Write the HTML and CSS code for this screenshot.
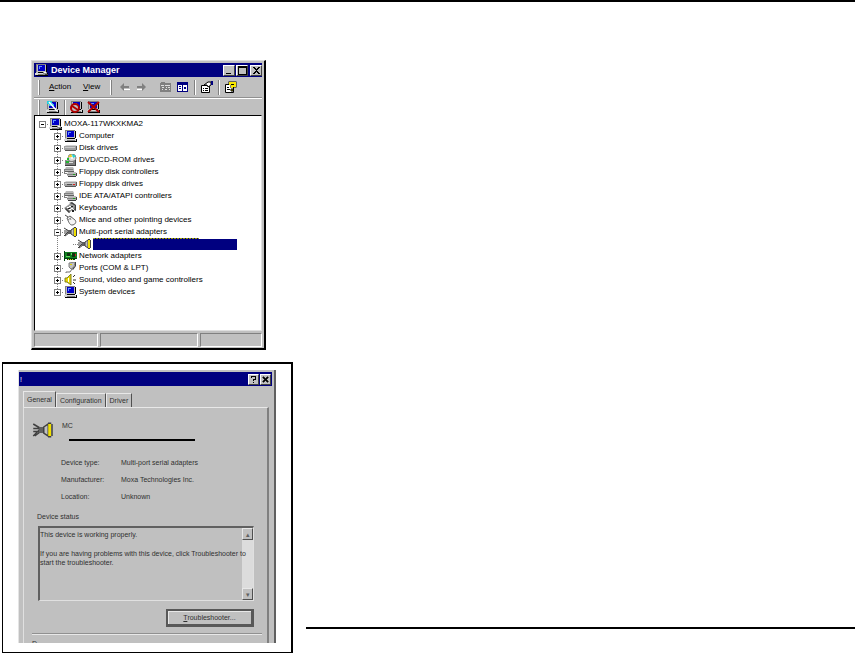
FILE: index.html
```html
<!DOCTYPE html>
<html lang="en">
<head>
<meta charset="utf-8">
<title>Device Manager</title>
<link rel="stylesheet" href="styles.css">
</head>
<body>
<svg class="defs" aria-hidden="true">
  <symbol id="pc" viewBox="0 0 13 12"><path fill="#c0c0c0" d="M1 0h10v9H1z"/><path fill="#808080" d="M1 0h10v1H1zM1 0h1v8H1z"/><path fill="#0000c8" d="M3 1h7v6H3z"/><path fill="#6090ff" d="M4 2h3v1H4zM4 3h1v2H4z"/><path fill="#000" d="M11 1h1v7h-1zM3 8h8v1H3zM1 11h12v1H1zM12 9h1v2h-1z"/><path fill="#d8d8d8" d="M0 9h12v2H0z"/><path fill="#808080" d="M3 10h8v1H3z"/></symbol>
  <symbol id="scan" viewBox="0 0 13 12"><use href="#pc"/><path fill="#20d0e0" d="M1 0h5v3H1zM3 3h5v2H3z"/><path stroke="#fff" stroke-width="1.500" d="M3 1l8 9"/></symbol>
  <symbol id="root" viewBox="0 0 13 12"><use href="#pc"/><path fill="#909090" d="M8 8h4v3H8z"/><path fill="#fff" d="M9 8h2v1H9z"/><path fill="#404040" d="M10 10h3v1h-3z"/></symbol>
  <symbol id="disk" viewBox="0 0 13 12"><path fill="#d0d0d0" d="M2 3h10l1 1H1z"/><path fill="#a0a0a0" d="M0 4h13v4H0z"/><path fill="#c8c8c8" d="M1 5h10v1H1z"/><path fill="#585858" d="M1 8h11v1H1zM12 4h1v4h-1z"/></symbol>
  <symbol id="floppy" viewBox="0 0 13 12"><use href="#disk"/><path fill="#505050" d="M3 6h5v1H3z"/><path fill="#e02020" d="M9 6h2v1H9z"/></symbol>
  <symbol id="cd" viewBox="0 0 13 12"><circle cx="8" cy="4" r="4" fill="#d8d8d8" stroke="#808080"/><path fill="#20d8d0" d="M8 0l4 2-3 2z"/><path fill="#e8d820" d="M4 3l3-3 1 3z"/><circle cx="8" cy="4" r="1" fill="#fff"/><path fill="#808080" d="M1 6l7 1 3-1v5H1z"/><path fill="#20b830" d="M3 4h2v2H3zM2 7h3v2H2z"/><path fill="#ddd" d="M5 8h4v1H5z"/><path fill="#404040" d="M1 11h11v1H1zM11 6h1v5h-1z"/></symbol>
  <symbol id="ctl" viewBox="0 0 13 12"><path fill="#b8b8b8" d="M2 1h7l1 2v2H1V3z"/><path fill="#606060" d="M1 5h9v1H1z"/><path fill="#b8b8b8" d="M4 6h8l1 2v2H3V8z"/><path fill="#808080" d="M1 3h8v1H1zM3 8h9v1H3zM0 3h1v4h2v1H0z"/><path fill="#404040" d="M4 10h8v1H4zM12 7h1v3h-1z"/><path fill="#20a020" d="M9 8h2v1H9z"/></symbol>
  <symbol id="keys" viewBox="0 0 13 12"><path fill="#989898" d="M0 6l7-5 5 4-7 6z"/><path fill="#404040" d="M5 1l3-1 4 3v6l-2-1 1-4-3-2zM1 7l4 4 1-1-4-4z"/><path fill="#fff" d="M3 5h2v1H3zM5 4h2v1H5zM5 7h2v1H5zM7 6h2v1H7z"/><path fill="#202020" d="M4 6h2v1H4zM7 4h2v1H7zM8 8h2v2H8z"/></symbol>
  <symbol id="mouse" viewBox="0 0 13 12"><path fill="none" stroke="#505050" d="M1 1l3 2"/><path fill="#f4f4f4" stroke="#606060" d="M3 4l3-2 5 4c2 2 0 5-3 5-2 0-3-2-5-7z"/><path fill="none" stroke="#888" d="M4 6l4-3M6 4l1 2"/></symbol>
  <symbol id="port" viewBox="0 0 13 12"><path fill="none" stroke="#404040" d="M0 2l5 3-5 5M0 5h5M0 7h4M1 10l4-3"/><path fill="#606060" d="M4 4h3v4H4z"/><path fill="#c0c0c0" stroke="#404040" d="M7 4l3-2v8L7 8z"/><path fill="#f0e000" d="M10 2h2v8h-2z"/><path fill="#404040" d="M10 1h2v1h-2zM12 2h1v8h-1zM10 10h2v1h-2z"/></symbol>
  <symbol id="net" viewBox="0 0 13 12"><path fill="#108020" d="M1 2h12v7H1z"/><path fill="#004010" d="M0 1h1v10H0zM3 9h8v1H3zM1 8h12v1H1z"/><path fill="#103010" d="M3 3h3v3H3zM8 3h3v4H8z"/><path fill="#e0d020" d="M4 9h1v1H4zM6 9h1v1H6zM8 9h1v1H8z"/><path fill="#60e060" d="M7 3h1v2H7zM2 6h4v1H2z"/><path fill="#d02020" d="M11 4h1v2h-1z"/></symbol>
  <symbol id="com" viewBox="0 0 13 12"><path fill="#c0c0c0" stroke="#808080" d="M5 1l6-1-1 5-3 2-2-2z"/><path fill="#404040" d="M11 0h1v4l-3 4-1-1 3-3z"/><path fill="none" stroke="#707070" d="M8 7l-2 3H2v1"/><path fill="#e0d000" d="M6 2h2v1H6z"/></symbol>
  <symbol id="sound" viewBox="0 0 13 12"><path fill="#e8d800" stroke="#808020" d="M1 4h2l4-4v11L3 8H1z"/><path fill="#fff" d="M4 4h1v4H4z"/><path fill="none" stroke="#303030" d="M9 3l2-2M9 6h3M9 8l2 2"/></symbol>
  <symbol id="props" viewBox="0 0 13 12"><path fill="#fff" stroke="#000" d="M1.500 4.500h8v7h-8z"/><path fill="#000" d="M3 7h1v1H3zM5 7h3v1H5zM3 9h1v1H3zM5 9h3v1H5z"/><path fill="#fff" stroke="#000" d="M4 4l4-3h3v3L8 6 7 4z"/><path fill="#000080" d="M11 0h2v4h-2z"/></symbol>
  <symbol id="help" viewBox="0 0 13 12"><path fill="#fff" stroke="#000" d="M1.500 3.500h8v8h-8z"/><path fill="#000" d="M3 6h2v1H3zM3 8h3v1H3z"/><path fill="none" stroke="#000" stroke-width="3" d="M6 4V2h5v3H8v2"/><path fill="none" stroke="#f8e800" stroke-width="2" d="M6 4V2h5v3H8v2"/><path fill="#f8e800" stroke="#000" d="M7 8h2v2H7z"/></symbol>
</svg>

<main class="page">
  <section class="window" aria-label="Device Manager">
    <header class="titlebar">
      <svg class="icon"><use href="#root"/></svg>
      <h1>Device Manager</h1>
      <div class="caption">
        <button class="cap" aria-label="Minimize"><svg viewBox="0 0 9 9"><path d="M1 7h5v1H1z"/></svg></button>
        <button class="cap" aria-label="Maximize"><svg viewBox="0 0 9 9"><path d="M0 0h9v9H0zM1 2v6h7V2z" fill-rule="evenodd"/></svg></button>
        <button class="cap close" aria-label="Close"><svg viewBox="0 0 9 9"><path d="M1 1h2v1h1v1h1V2h1V1h2v1H7v1H6v1H5v1h1v1h1v1h1v1H6V7H5V6H4v1H3v1H1V7h1V6h1V5h1V4H3V3H2V2H1z"/></svg></button>
      </div>
    </header>
    <nav class="toolbar first">
      <i class="grip"></i>
      <button class="menu"><u>A</u>ction</button>
      <button class="menu view"><u>V</u>iew</button>
      <i class="grip"></i>
      <button class="tool" aria-label="Back"><svg class="icon"><path fill="#808080" d="M2 6l4-4v3h5v2H6v3z"/><path fill="#fff" d="M6 8h6v1H6z"/></svg></button>
      <button class="tool" aria-label="Forward"><svg class="icon"><path fill="#808080" d="M11 6L7 2v3H2v2h5v3z"/><path fill="#fff" d="M2 8h5v1H2z"/></svg></button>
      <button class="tool gap" aria-label="Up"><svg class="icon"><path fill="#808080" d="M1 2h1V1h4v1h6v9H1z"/><path fill="#e0e0e0" d="M2 4h3v1H2zM6 4h5v1H6zM3 6h2v1H3zM7 6h1v1H7zM9 6h2v1H9zM3 8h1v1H3zM6 8h2v1H6zM10 8h1v1h-1z"/></svg></button>
      <button class="tool" aria-label="Show tree"><svg class="icon"><path fill="#000080" d="M1 1h11v10H1z"/><path fill="#fff" d="M2 4h4v6H2zM7 4h4v6H7z"/><path fill="#000080" d="M3 5h2v1H3zM3 7h2v1H3zM8 6h2v2H8z"/></svg></button>
      <i class="sep"></i>
      <button class="tool" aria-label="Properties"><svg class="icon"><use href="#props"/></svg></button>
      <i class="sep"></i>
      <button class="tool" aria-label="Help"><svg class="icon"><use href="#help"/></svg></button>
    </nav>
    <nav class="toolbar">
      <i class="grip"></i>
      <button class="tool" aria-label="Scan"><svg class="icon"><use href="#scan"/></svg></button>
      <i class="sep"></i>
      <button class="tool" aria-label="Disable"><svg class="icon"><use href="#pc"/><circle cx="5" cy="7" r="4" fill="#c0c0c0" stroke="#b00000" stroke-width="2"/><path stroke="#b00000" stroke-width="2" d="M2 5l6 4"/></svg></button>
      <button class="tool" aria-label="Uninstall"><svg class="icon"><use href="#pc"/><path stroke="#b00000" stroke-width="2" d="M1 1l11 10M12 1L1 11"/></svg></button>
    </nav>

    <div class="tree">
      <div class="row"><button class="toggle minus" aria-label="Collapse"></button><i class="stub"></i><svg class="icon"><use href="#root"/></svg><span>MOXA-117WKXKMA2</span></div>
      <ul class="branch">
        <li class="row"><button class="toggle" aria-label="Expand"></button><i class="stub"></i><svg class="icon"><use href="#pc"/></svg><span>Computer</span></li>
        <li class="row"><button class="toggle" aria-label="Expand"></button><i class="stub"></i><svg class="icon"><use href="#disk"/></svg><span>Disk drives</span></li>
        <li class="row"><button class="toggle" aria-label="Expand"></button><i class="stub"></i><svg class="icon"><use href="#cd"/></svg><span>DVD/CD-ROM drives</span></li>
        <li class="row"><button class="toggle" aria-label="Expand"></button><i class="stub"></i><svg class="icon"><use href="#ctl"/></svg><span>Floppy disk controllers</span></li>
        <li class="row"><button class="toggle" aria-label="Expand"></button><i class="stub"></i><svg class="icon"><use href="#floppy"/></svg><span>Floppy disk drives</span></li>
        <li class="row"><button class="toggle" aria-label="Expand"></button><i class="stub"></i><svg class="icon"><use href="#ctl"/></svg><span>IDE ATA/ATAPI controllers</span></li>
        <li class="row"><button class="toggle" aria-label="Expand"></button><i class="stub"></i><svg class="icon"><use href="#keys"/></svg><span>Keyboards</span></li>
        <li class="row"><button class="toggle" aria-label="Expand"></button><i class="stub"></i><svg class="icon"><use href="#mouse"/></svg><span>Mice and other pointing devices</span></li>
        <li class="row"><button class="toggle minus" aria-label="Collapse"></button><i class="stub"></i><svg class="icon"><use href="#port"/></svg><span>Multi-port serial adapters</span></li>
        <li class="row leaf"><i class="stub"></i><svg class="icon"><use href="#port"/></svg><span class="selected"></span></li>
        <li class="row"><button class="toggle" aria-label="Expand"></button><i class="stub"></i><svg class="icon"><use href="#net"/></svg><span>Network adapters</span></li>
        <li class="row"><button class="toggle" aria-label="Expand"></button><i class="stub"></i><svg class="icon"><use href="#com"/></svg><span>Ports (COM &amp; LPT)</span></li>
        <li class="row"><button class="toggle" aria-label="Expand"></button><i class="stub"></i><svg class="icon"><use href="#sound"/></svg><span>Sound, video and game controllers</span></li>
        <li class="row"><button class="toggle" aria-label="Expand"></button><i class="stub"></i><svg class="icon"><use href="#pc"/></svg><span>System devices</span></li>
      </ul>
    </div>
    <footer class="status"><span></span><span></span><span></span></footer>
  </section>

  <div class="lower">
    <div class="frame">
      <section class="dialog" aria-label="Device properties">
        <header class="dialog-title">
          <span>!</span>
          <button class="cap" aria-label="Help"><svg viewBox="0 0 9 9"><path d="M2 1h5v4H5v1H4V4h2V2H3v1H2zM4 7h1v1H4z"/></svg></button>
          <button class="cap" aria-label="Close"><svg viewBox="0 0 9 9"><path d="M2 2h1v1h1v1h1V3h1V2h1v1H6v1H5v1h1v1h1v1H6V6H5V5H4v1H3v1H2V6h1V5h1V4H3V3H2z" stroke="#000"/></svg></button>
        </header>
        <nav class="tabs"><button class="tab active">General</button><button class="tab">Configuration</button><button class="tab">Driver</button></nav>
        <div class="panel">
          <div class="device"><svg class="big"><use href="#port"/></svg><span>MC</span></div>
          <div class="bar"></div>
          <dl class="facts">
            <dt>Device type:</dt><dd>Multi-port serial adapters</dd>
            <dt>Manufacturer:</dt><dd>Moxa Technologies Inc.</dd>
            <dt>Location:</dt><dd>Unknown</dd>
          </dl>
          <h2>Device status</h2>
          <div class="statusbox">
            <div class="message"><p>This device is working properly.</p><p>If you are having problems with this device, click Troubleshooter to<br>start the troubleshooter.</p></div>
            <div class="scroll"><button aria-label="Scroll up">▴</button><button aria-label="Scroll down">▾</button></div>
          </div>
          <button class="trouble"><u>T</u>roubleshooter...</button>
          <div class="groove"></div>
          <div class="cut">D...</div>
        </div>
      </section>
    </div>
    <div class="rule"></div>
  </div>
</main>
</body>
</html>
```

FILE: styles.css
```css
* { box-sizing: border-box; }

body {
  margin: 0;
  border-top: 2px solid #000;
  background: #fff;
  color: #000;
  font: 8px/12px "Liberation Sans", Arial, sans-serif;
}

h1, h2, p, ul, dl, dd { margin: 0; padding: 0; font-size: inherit; }
ul { list-style: none; }
svg { display: block; }
.defs { display: none; }

button {
  margin: 0;
  padding: 0;
  border: 0;
  background: none;
  color: inherit;
  font: inherit;
}

.icon { flex: none; width: 13px; height: 12px; }

/* Device Manager window */
.page { padding-top: 58px; }

.window {
  max-width: 235px;
  margin-left: 31px;
  padding: 2px 2px 1px;
  border: 1px solid #dfdfdf;
  border-right: 2px solid #000;
  border-bottom: 2px solid #000;
  background: #c0c0c0;
}

.titlebar {
  display: flex;
  align-items: center;
  gap: 3px;
  height: 14px;
  padding-left: 1px;
  background: #000080;
  color: #fff;
}

.titlebar h1 { flex: 1; font-size: 9px; font-weight: bold; }
.caption { display: flex; gap: 1px; }

.cap {
  display: grid;
  place-items: center;
  width: 12px;
  height: 11px;
  border: 1px solid #fff;
  border-right-color: #404040;
  border-bottom-color: #404040;
  background: #c0c0c0;
}

.cap svg { width: 9px; height: 9px; }
.cap.close { margin-left: 1px; }

.toolbar { display: flex; align-items: center; height: 17px; padding-left: 4px; }
.toolbar.first { height: 21px; border-bottom: 1px solid #909090; }
.toolbar + .toolbar { border-top: 1px solid #fff; }

.grip, .sep {
  width: 2px;
  height: 15px;
  border-left: 1px solid #fff;
  border-right: 1px solid #808080;
}

.grip { margin-right: 6px; }
.sep { margin: 0 4px 0 1px; border-left-color: #808080; border-right-color: #fff; }
.menu { width: 34px; padding-left: 3px; text-align: left; }
.menu.view { width: 30px; }
.tool { margin-right: 4px; }
.tool.gap { margin-left: 7px; }

.tree {
  height: 216px;
  padding: 2px 4px;
  border: 1px solid #000;
  border-right-color: #dfdfdf;
  border-bottom-color: #dfdfdf;
  background: #fff;
}

.row { display: flex; align-items: center; height: 12px; white-space: nowrap; }
.row .icon { margin-right: 2px; }

.branch {
  padding-left: 15px;
  background: repeating-linear-gradient(#808080 0 1px, #fff 1px 2px) 18px 0 / 1px calc(100% - 6px) no-repeat;
}

.toggle {
  width: 7px;
  height: 7px;
  border: 1px solid #808080;
  background:
    linear-gradient(#000, #000) center / 3px 1px no-repeat,
    linear-gradient(#000, #000) center / 1px 3px no-repeat,
    #fff;
}

.toggle.minus { background: linear-gradient(#000, #000) center / 3px 1px no-repeat, #fff; }
.stub { width: 3px; height: 1px; background: repeating-linear-gradient(90deg, #fff 0 1px, #808080 1px 2px); }
.leaf { padding-left: 18px; }
.leaf .stub { width: 6px; }

.selected {
  width: 144px;
  height: 12px;
  background:
    repeating-linear-gradient(90deg, #a0a000 0 2px, #000080 2px 3px) 0 0 / 106px 1px no-repeat,
    linear-gradient(#000080, #000080) 0 1px no-repeat;
}

.status { display: grid; grid-template-columns: 65fr 99fr 63fr; gap: 2px; padding-top: 2px; }

.status span {
  height: 14px;
  border: 1px solid #808080;
  border-right-color: #fff;
  border-bottom-color: #fff;
}

/* Framed properties dialog beside the closing rule */
.lower { display: flex; align-items: flex-end; gap: 13px; margin-top: 12px; }

.frame {
  flex: 0 1 291px;
  min-width: 0;
  margin-left: 2px;
  padding: 6px 15px 9px;
  border: solid #000;
  border-width: 2px 2px 1px 1px;
}

.rule { flex: 1; height: 2px; margin-bottom: 24px; background: #000; }

.dialog {
  height: 273px;
  overflow: hidden;
  padding: 2px 2px 0 0;
  border-left: 1px solid #e4e4e4;
  border-right: 2px solid #606060;
  background: #c0c0c0;
  color: #303030;
  font-size: 7px;
  line-height: 9px;
}

.dialog-title {
  display: flex;
  align-items: center;
  gap: 1px;
  height: 14px;
  padding: 0 1px;
  background: #000080;
  color: #fff;
}

.dialog-title span { flex: 1; }
.dialog-title .cap { width: 11px; color: #000; }

.tabs { display: flex; align-items: flex-end; height: 21px; padding-left: 4px; }

.tab {
  height: 14px;
  padding: 0 3px;
  border: 1px solid #e8e8e8;
  border-right-color: #505050;
  border-bottom: 0;
}

.tab.active { height: 16px; }

.panel {
  margin: 0 3px 0 4px;
  padding: 13px 13px 0 8px;
  border-top: 1px solid #e8e8e8;
  border-left: 1px solid #e0e0e0;
  border-right: 2px solid #808080;
}

.device { display: flex; gap: 8px; height: 18px; }
.big { width: 22px; height: 18px; }

.bar { width: 126px; height: 2px; margin-left: 37px; background: #000; }

.facts {
  display: grid;
  grid-template-columns: 60px 1fr;
  gap: 8px 0;
  padding: 17px 0 0 29px;
}

.panel h2 { margin: 11px 0 5px 5px; font-weight: normal; }

.statusbox {
  display: flex;
  height: 75px;
  margin-left: 6px;
  border: 1px solid #e0e0e0;
  border-top: 2px solid #606060;
  border-left: 2px solid #606060;
}

/* Long lines run on over the scroll track */
.message { position: relative; z-index: 1; flex: 1; min-width: 0; padding-top: 2px; white-space: nowrap; }
.message p + p { margin-top: 10px; }

.scroll {
  display: flex;
  flex: none;
  flex-direction: column;
  justify-content: space-between;
  width: 11px;
  background: #dcdcdc;
}

.scroll button {
  height: 12px;
  border: 1px solid #e8e8e8;
  border-right-color: #505050;
  border-bottom-color: #505050;
  background: #c0c0c0;
  color: #606060;
}

.trouble {
  display: block;
  width: 88px;
  height: 18px;
  margin: 8px 0 0 auto;
  border: 2px solid #585858;
  border-right-width: 3px;
  border-bottom-width: 3px;
  box-shadow: inset 1px 1px #e8e8e8;
}

.groove { height: 2px; margin: 6px -8px 4px 0; border-top: 1px solid #909090; border-bottom: 1px solid #e8e8e8; }
```
